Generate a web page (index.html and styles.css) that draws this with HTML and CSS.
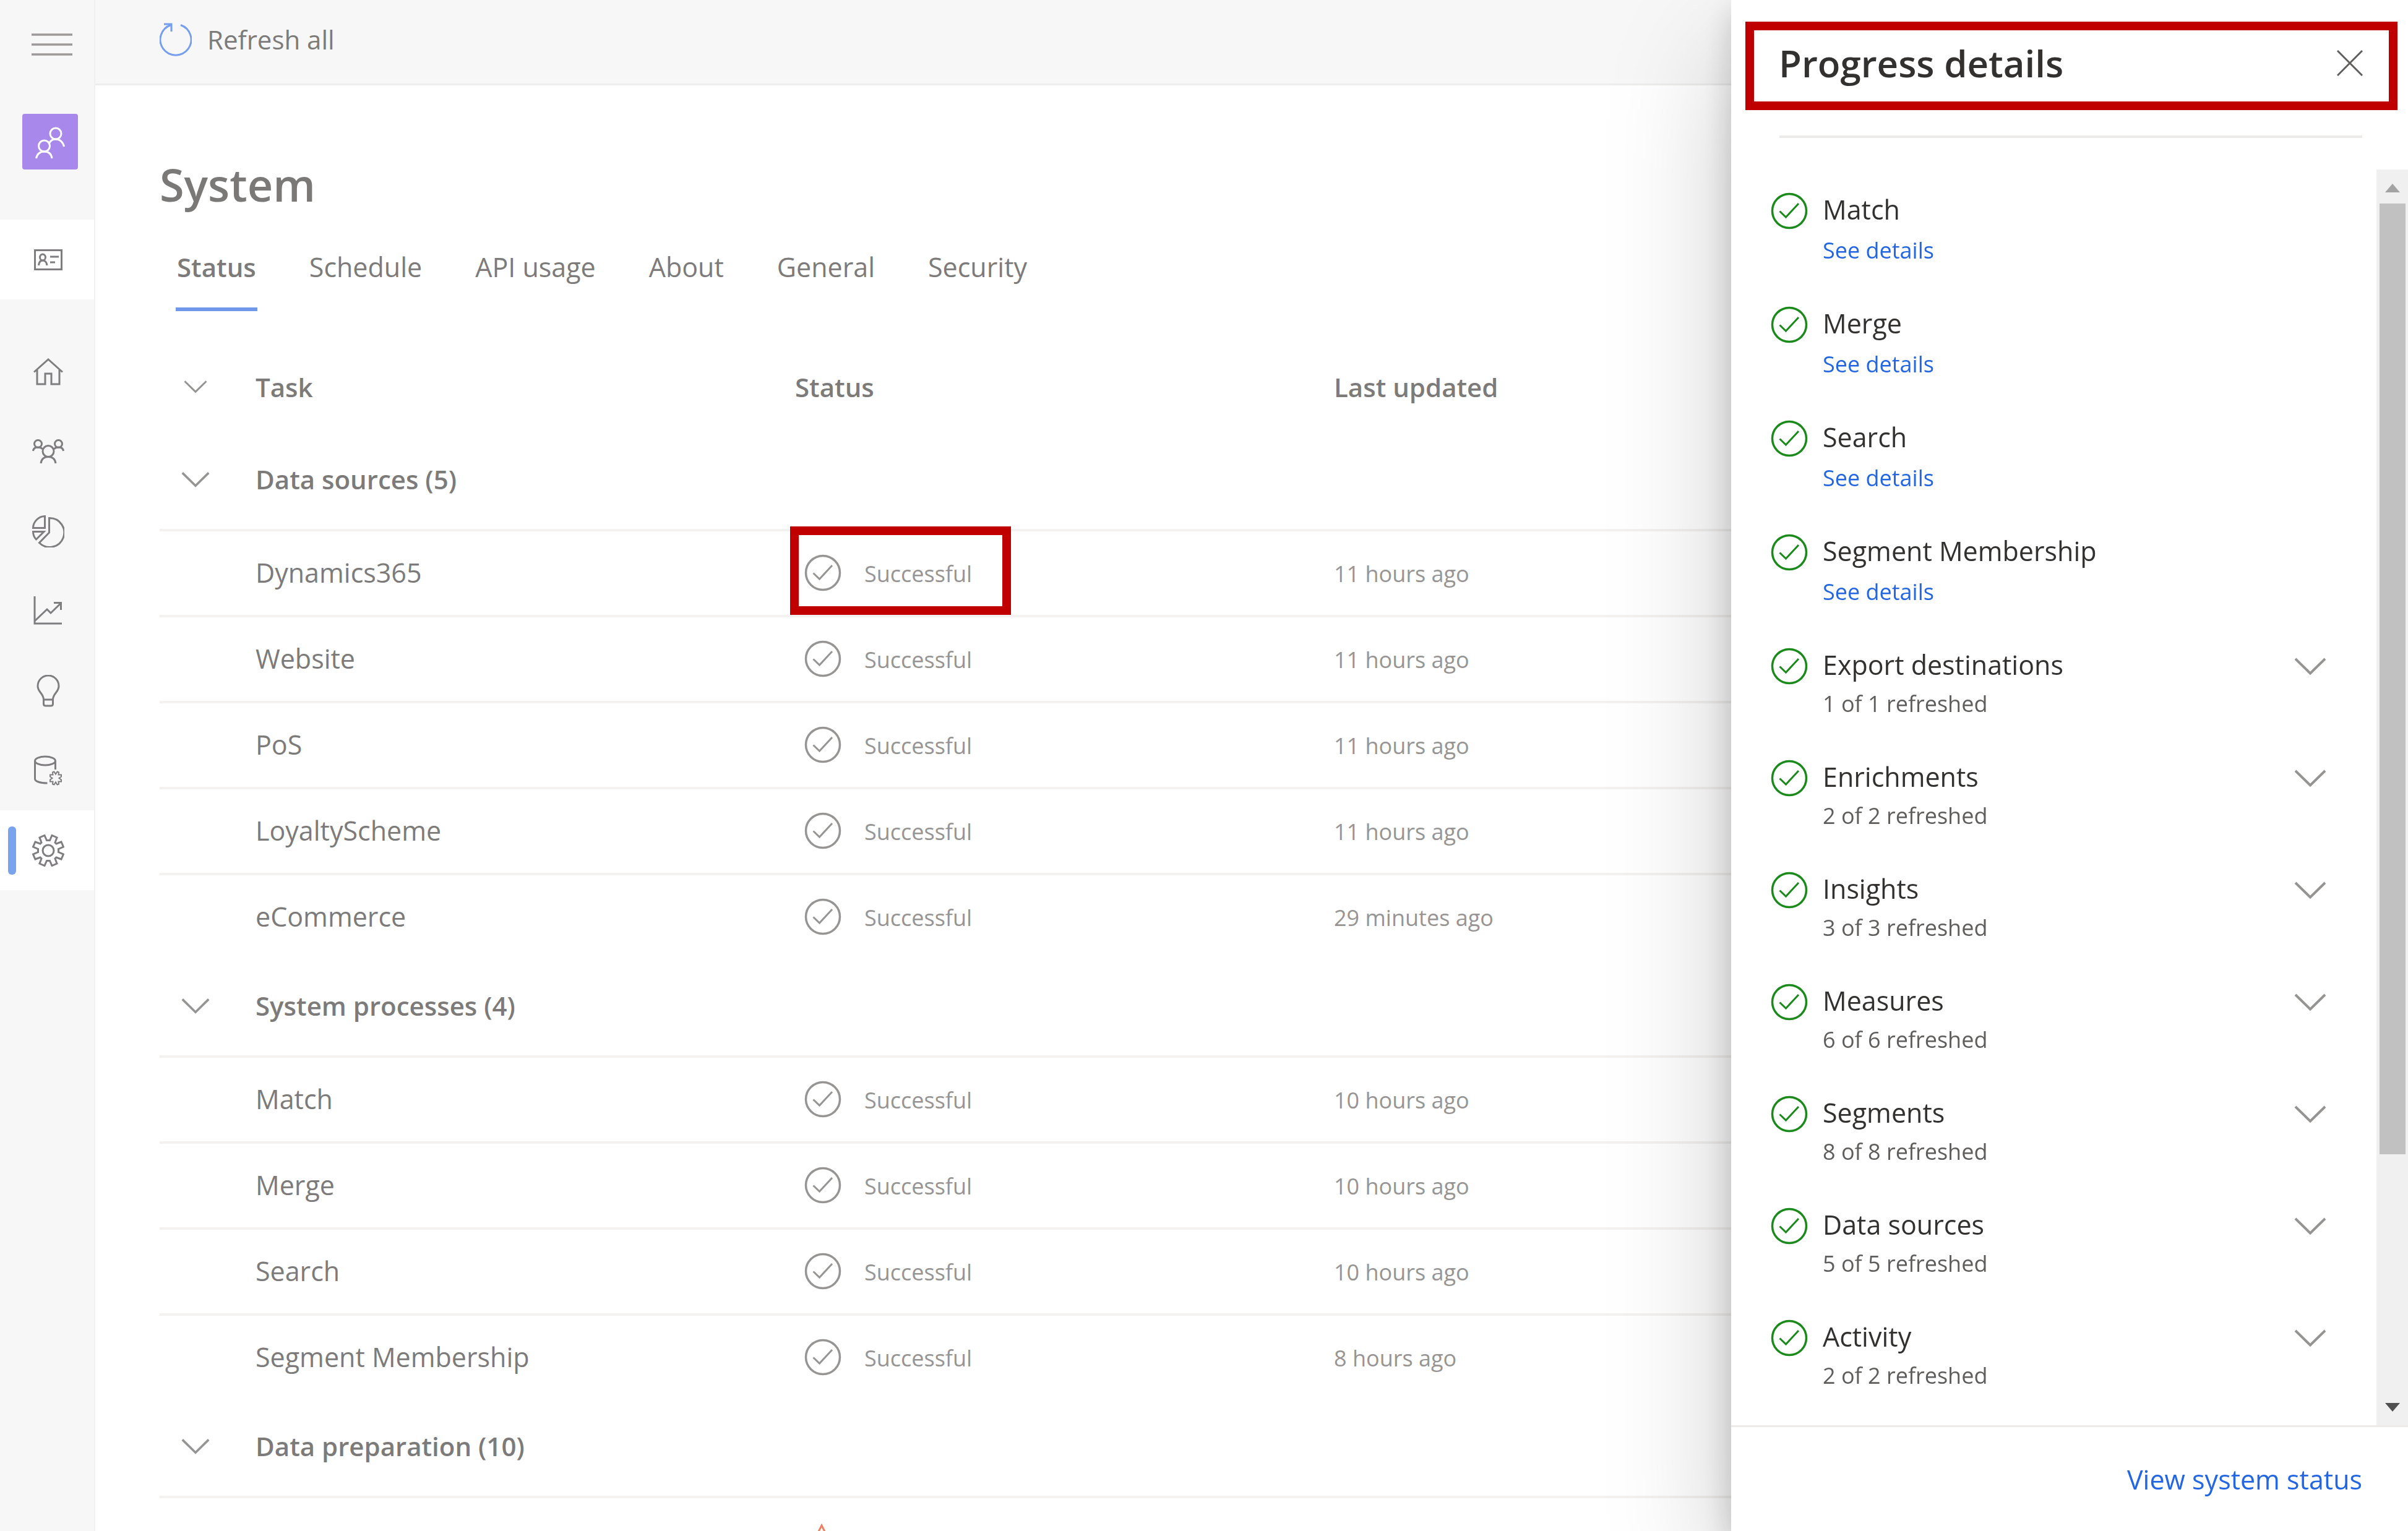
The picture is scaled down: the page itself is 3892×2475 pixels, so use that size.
FILE: index.html
```html
<!DOCTYPE html>
<html lang="en">
<head>
<meta charset="utf-8">
<meta name="viewport" content="width=device-width, initial-scale=1">
<title>System</title>
<link rel="stylesheet" href="styles.css">
</head>
<body>
<svg class="sprite" aria-hidden="true">
  <symbol id="check" viewBox="0 0 60 60"><circle cx="30" cy="30" r="27.5" stroke-width="3.5"/><path d="M14.5 30.5l10 9.5 20.500-22" stroke-width="3"/></symbol>
  <symbol id="chevron" viewBox="0 0 52 28"><path d="M2 2l24 23.500L50 2"/></symbol>
</svg>
<div class="app">
  <nav class="sidebar" aria-label="Main">
    <button class="menu" aria-label="Menu"><svg width="66" height="36" viewBox="0 0 66 36"><path d="M0 2h66M0 18h66M0 34h66" stroke-width="3.500"/></svg></button>
    <a class="brand" href="#" aria-label="Customer Insights"><svg width="90" height="90" viewBox="0 0 90 90"><circle cx="54" cy="32" r="9"/><circle cx="35.500" cy="52" r="9"/><path d="M43.500 47.500c2-4 6-6.500 10.500-6.500 7 0 12 5 13.500 12M22.500 72c1.500-7 6-11 13-11s11.500 4 12.500 11"/></svg></a>
    <a class="nav-item current" href="#" aria-label="Customers"><svg width="46" height="34" viewBox="0 0 46 34"><path d="M1.500 1.500h43v31h-43zM26 12h14M26 21h8M7.500 26c.5-5 3-8 6.500-8s6.500 3 7 8"/><ellipse cx="14" cy="13" rx="4.500" ry="5"/></svg></a>
    <div class="nav-group">
      <a class="nav-item" href="#" aria-label="Home"><svg width="48" height="44" viewBox="0 0 48 44"><path d="M1 22.500L24 2l23 20.500M6 19v23h13V25h10v17h13V19"/></svg></a>
      <a class="nav-item" href="#" aria-label="People"><svg width="52" height="40" viewBox="0 0 52 40"><circle cx="9.500" cy="7.500" r="6"/><circle cx="42.500" cy="7.500" r="6"/><circle cx="26" cy="19.500" r="9"/><path d="M1.500 19c.5-4 3.500-6 8-6 3 0 5.500 1 7.500 3M50.500 19c-.5-4-3.500-6-8-6-3 0-5.500 1-7.500 3M14 39c1-7 5-10.500 12-10.500S37 32 38 39"/></svg></a>
      <a class="nav-item" href="#" aria-label="Insights"><svg width="52" height="52" viewBox="0 0 52 52"><path d="M20.500 1.500v19h-19c0-10 9-19 19-19zM1.500 26.500H19L6.500 39c-3-3-5-7-5-12.500zM27.500 4.500V28L11.500 44.500A23.500 23.500 0 1 0 27.500 4.500z"/></svg></a>
      <a class="nav-item" href="#" aria-label="Measures"><svg width="48" height="48" viewBox="0 0 48 48"><path d="M2 0v44h44M2 40l20-19 6 6 16.500-16M33 10.500h11.500V22"/></svg></a>
      <a class="nav-item" href="#" aria-label="Intelligence"><svg width="38" height="52" viewBox="0 0 38 52"><path d="M11.500 40C11.500 30 2 28 2 18a17 17 0 0 1 34 0c0 10-9.500 12-9.500 22v7q0 3-3.500 3h-8q-3.500 0-3.500-3v-7h15"/></svg></a>
      <a class="nav-item" href="#" aria-label="Data"><svg width="46" height="50" viewBox="0 0 46 50"><ellipse cx="18" cy="9" rx="16.500" ry="7"/><path d="M1.500 9v29c0 4 8 7 20 7M34.500 9v14"/><path d="M35 30.500l2.500-4 2.500 1-.5 4 4.500 0v3l-3.500 2.500 3.500 2.500v3h-4.500l.5 4-2.500 1-2.500-4-2.500 4-2.500-1 .5-4H26v-3l3.500-2.500-3.500-2.500v-3h4.500l-.5-4 2.500-1z" stroke-width="2"/></svg></a>
      <a class="nav-item current active" href="#" aria-label="System"><svg width="52" height="52" viewBox="0 0 52 52"><circle cx="26" cy="26" r="9"/><path id="q" d="M26 9.500h2.500L32 1.500l8 3.500-3 8 2 2 8-3 3.500 8-8 3.500V26"/><use href="#q" transform="rotate(90 26 26)"/><use href="#q" transform="rotate(180 26 26)"/><use href="#q" transform="rotate(270 26 26)"/></svg></a>
    </div>
  </nav>

  <main class="main">
    <div class="toolbar">
      <button class="refresh"><svg width="52" height="56" viewBox="0 0 52 56"><path d="M34 4.500A25 25 0 1 1 18 4.500M7 3h12v12"/></svg>Refresh all</button>
    </div>
    <div class="content">
      <h1>System</h1>
      <div class="tabs" role="tablist">
        <button class="tab selected" role="tab" aria-selected="true">Status</button>
        <button class="tab" role="tab">Schedule</button>
        <button class="tab" role="tab">API usage</button>
        <button class="tab" role="tab">About</button>
        <button class="tab" role="tab">General</button>
        <button class="tab" role="tab">Security</button>
      </div>
      <table class="tasks">
        <colgroup><col class="c-toggle"><col class="c-task"><col class="c-status"><col></colgroup>
        <thead>
          <tr><th><button class="toggle small" aria-label="Collapse all"><svg><use href="#chevron"/></svg></button></th><th>Task</th><th>Status</th><th>Last updated</th></tr>
        </thead>
        <tbody>
          <tr class="group"><th><button class="toggle" aria-label="Collapse Data sources"><svg><use href="#chevron"/></svg></button></th><th colspan="3">Data sources (5)</th></tr>
          <tr><td></td><td>Dynamics365</td><td class="result marked"><span class="status"><svg><use href="#check"/></svg>Successful</span></td><td class="result">11 hours ago</td></tr>
          <tr><td></td><td>Website</td><td class="result"><span class="status"><svg><use href="#check"/></svg>Successful</span></td><td class="result">11 hours ago</td></tr>
          <tr><td></td><td>PoS</td><td class="result"><span class="status"><svg><use href="#check"/></svg>Successful</span></td><td class="result">11 hours ago</td></tr>
          <tr><td></td><td>LoyaltyScheme</td><td class="result"><span class="status"><svg><use href="#check"/></svg>Successful</span></td><td class="result">11 hours ago</td></tr>
          <tr><td></td><td>eCommerce</td><td class="result"><span class="status"><svg><use href="#check"/></svg>Successful</span></td><td class="result">29 minutes ago</td></tr>
        </tbody>
        <tbody>
          <tr class="group"><th><button class="toggle" aria-label="Collapse System processes"><svg><use href="#chevron"/></svg></button></th><th colspan="3">System processes (4)</th></tr>
          <tr><td></td><td>Match</td><td class="result"><span class="status"><svg><use href="#check"/></svg>Successful</span></td><td class="result">10 hours ago</td></tr>
          <tr><td></td><td>Merge</td><td class="result"><span class="status"><svg><use href="#check"/></svg>Successful</span></td><td class="result">10 hours ago</td></tr>
          <tr><td></td><td>Search</td><td class="result"><span class="status"><svg><use href="#check"/></svg>Successful</span></td><td class="result">10 hours ago</td></tr>
          <tr><td></td><td>Segment Membership</td><td class="result"><span class="status"><svg><use href="#check"/></svg>Successful</span></td><td class="result">8 hours ago</td></tr>
        </tbody>
        <tbody>
          <tr class="group"><th><button class="toggle" aria-label="Collapse Data preparation"><svg><use href="#chevron"/></svg></button></th><th colspan="3">Data preparation (10)</th></tr>
          <tr><td></td><td></td><td class="result"><span class="status warning"><svg viewBox="0 0 60 60"><path d="M28 7l25 50H3z"/></svg></span></td><td></td></tr>
        </tbody>
      </table>
    </div>
  </main>
</div>

<aside class="panel" aria-label="Progress details">
  <header class="panel-header">
    <h2>Progress details</h2>
    <button aria-label="Close"><svg width="42" height="42" viewBox="0 0 42 42"><path d="M1 1l40 40M41 1L1 41"/></svg></button>
  </header>
  <hr>
  <div class="panel-body">
    <ul class="progress">
      <li><svg class="ok"><use href="#check"/></svg><span class="name">Match</span><a href="#">See details</a></li>
      <li><svg class="ok"><use href="#check"/></svg><span class="name">Merge</span><a href="#">See details</a></li>
      <li><svg class="ok"><use href="#check"/></svg><span class="name">Search</span><a href="#">See details</a></li>
      <li><svg class="ok"><use href="#check"/></svg><span class="name">Segment Membership</span><a href="#">See details</a></li>
      <li><svg class="ok"><use href="#check"/></svg><span class="name">Export destinations</span><button class="toggle large" aria-label="Expand Export destinations"><svg><use href="#chevron"/></svg></button><span class="count">1 of 1 refreshed</span></li>
      <li><svg class="ok"><use href="#check"/></svg><span class="name">Enrichments</span><button class="toggle large" aria-label="Expand Enrichments"><svg><use href="#chevron"/></svg></button><span class="count">2 of 2 refreshed</span></li>
      <li><svg class="ok"><use href="#check"/></svg><span class="name">Insights</span><button class="toggle large" aria-label="Expand Insights"><svg><use href="#chevron"/></svg></button><span class="count">3 of 3 refreshed</span></li>
      <li><svg class="ok"><use href="#check"/></svg><span class="name">Measures</span><button class="toggle large" aria-label="Expand Measures"><svg><use href="#chevron"/></svg></button><span class="count">6 of 6 refreshed</span></li>
      <li><svg class="ok"><use href="#check"/></svg><span class="name">Segments</span><button class="toggle large" aria-label="Expand Segments"><svg><use href="#chevron"/></svg></button><span class="count">8 of 8 refreshed</span></li>
      <li><svg class="ok"><use href="#check"/></svg><span class="name">Data sources</span><button class="toggle large" aria-label="Expand Data sources"><svg><use href="#chevron"/></svg></button><span class="count">5 of 5 refreshed</span></li>
      <li><svg class="ok"><use href="#check"/></svg><span class="name">Activity</span><button class="toggle large" aria-label="Expand Activity"><svg><use href="#chevron"/></svg></button><span class="count">2 of 2 refreshed</span></li>
    </ul>
    <div class="scrollbar" aria-hidden="true">
      <svg width="24" height="14" viewBox="0 0 24 14"><path d="M12 0l12 14H0z" fill="#a3a3a3"/></svg>
      <div class="track"><div class="thumb"></div></div>
      <svg width="24" height="14" viewBox="0 0 24 14"><path d="M0 0h24L12 14z" fill="#505050"/></svg>
    </div>
  </div>
  <footer class="panel-footer"><a href="#">View system status</a></footer>
</aside>
</body>
</html>
```
FILE: styles.css
```css
*, *::before, *::after { box-sizing: border-box; }

body {
  margin: 0;
  height: 100vh;
  overflow: hidden;
  background: #fff;
  color: #7c7b7a;
  font-family: "Open Sans", "Noto Sans", sans-serif;
  font-size: 43px;
}

h1, h2, ul, hr { margin: 0; padding: 0; }
h1, h2, th { font-weight: 600; }

button {
  padding: 0;
  border: 0;
  background: none;
  color: inherit;
  font: inherit;
}

a { color: #2266e3; text-decoration: none; }

svg {
  display: block;
  flex: none;
  fill: none;
  stroke: currentColor;
  stroke-width: 3;
}

.sprite { position: absolute; width: 0; height: 0; }

.app { display: flex; height: 100vh; }

/* Sidebar */
.sidebar {
  flex: none;
  display: flex;
  flex-direction: column;
  align-items: flex-start;
  width: 154px;
  border-right: 2px solid #f1f0ef;
  background: #f7f7f7;
}

.menu { margin: 54px 0 94px 51px; color: #9d9a99; }

.brand {
  margin: 0 0 81px 36px;
  border-radius: 4px;
  background: #a888ea;
  color: #fff;
}

.nav-group { width: 100%; margin-top: 52px; }

.nav-item {
  display: flex;
  align-items: center;
  justify-content: center;
  width: 100%;
  height: 129px;
  padding-left: 3px;
  color: #7f7d80;
}

.nav-item.current { background: #fff; }
.nav-item.active { position: relative; }

.nav-item.active::before {
  content: "";
  position: absolute;
  left: 13px;
  width: 13px;
  height: 78px;
  border-radius: 6px;
  background: #7aa3ee;
}

/* Main area */
.main { flex: 1; min-width: 0; }

.toolbar {
  display: flex;
  align-items: center;
  height: 138px;
  padding: 0 104px 8px;
  border-bottom: 3px solid #ededec;
  background: #f7f7f7;
}

.refresh { display: flex; align-items: center; gap: 25px; font-size: 42px; }
.refresh svg { color: #759df0; }

.content { padding: 110px 0 0 104px; }

h1 { color: #7a7978; font-size: 72px; line-height: 100px; }

.tabs { display: flex; gap: 82px; margin: 32px 0 48px 26px; }

.tab {
  padding: 0 2px 13px;
  border-bottom: 6px solid transparent;
  line-height: 104px;
}

.tab.selected { border-color: #6f98ea; font-size: 42px; font-weight: 600; }

.tasks {
  width: 100%;
  table-layout: fixed;
  border-spacing: 0;
  text-align: left;
}

.c-toggle { width: 155px; }
.c-task { width: 872px; }
.c-status { width: 871px; }

.tasks th { padding: 0; font-size: 42px; }
.tasks td { height: 139px; padding: 0 0 2px; border-top: 4px solid #f3f2f1; }
.tasks thead th { height: 148px; }
.tasks .group th { height: 156px; padding-bottom: 5px; }
.tasks .result { padding: 2px 0 0; color: #979593; font-size: 36px; }

.toggle { display: block; color: #959493; }
.tasks .toggle { margin-left: 35px; }
.toggle svg { width: 46px; height: 26px; stroke-width: 4; }
.toggle.small svg { width: 38px; height: 22px; margin-left: 4px; }
.toggle.large svg { width: 52px; height: 28px; }

.status {
  display: flex;
  align-items: center;
  gap: 37px;
  padding-left: 15px;
}

.status svg { width: 60px; height: 60px; margin-bottom: 4px; }
.status.warning { color: #ee7f60; }

.marked { position: relative; }

.marked::after {
  content: "";
  position: absolute;
  top: -8px;
  left: -8px;
  width: 357px;
  height: 143px;
  border: 14px solid #c00000;
}

/* Progress panel */
.panel {
  position: fixed;
  top: 0;
  right: 0;
  bottom: 0;
  display: flex;
  flex-direction: column;
  width: 1094px;
  background: #fff;
  box-shadow: 0 83px 187px rgba(0, 0, 0, .22), 0 16px 47px rgba(0, 0, 0, .18);
}

.panel-header {
  flex: none;
  display: flex;
  align-items: center;
  justify-content: space-between;
  margin: 35px 17px 41px 23px;
  padding: 0 42px 9px 40px;
  height: 143px;
  border: 14px solid #c00000;
  color: #323130;
}

.panel-header button { color: #605e5c; }

h2 { font-size: 60px; line-height: 80px; }

hr {
  flex: none;
  height: 4px;
  margin: 0 74px 51px 78px;
  border: 0;
  background: #edebe9;
}

.panel-body { flex: 1; display: flex; min-height: 0; }

.progress {
  flex: 1;
  padding: 37px 81px 0 64px;
  overflow: hidden;
  list-style: none;
}

.progress li {
  display: grid;
  grid-template-columns: 60px 1fr auto;
  column-gap: 24px;
  align-items: center;
  padding-bottom: 56px;
}

.ok { width: 60px; height: 60px; color: #1a8a1a; }
.name { padding-bottom: 4px; color: #323130; line-height: 56px; }
.progress a, .count { grid-column: 2; font-size: 36px; }
.progress a { line-height: 68px; }
.count { padding-bottom: 3px; color: #605e5c; line-height: 62px; }

.scrollbar {
  display: flex;
  flex-direction: column;
  align-items: center;
  gap: 18px;
  width: 51px;
  padding: 23px 0 22px;
  background: #f0f0f0;
}

.scrollbar svg { stroke: none; }
.track { flex: 1; width: 42px; }
.thumb { height: 80%; background: #c1c1c1; }

.panel-footer {
  flex: none;
  display: flex;
  align-items: center;
  justify-content: flex-end;
  height: 171px;
  padding-right: 74px;
  border-top: 3px solid #edebe9;
}
```
